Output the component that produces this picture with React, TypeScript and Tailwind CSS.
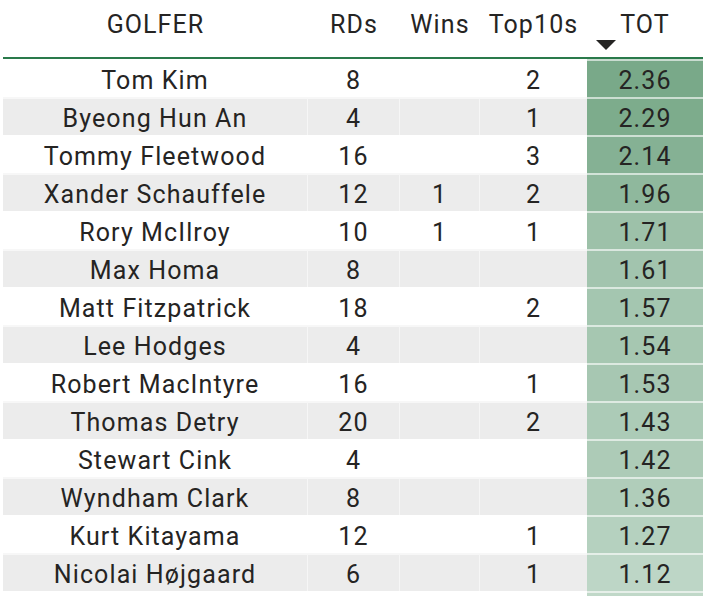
const rows = [
  { name: "Tom Kim", rds: 8, wins: "", top10: 2, tot: 2.36 },
  { name: "Byeong Hun An", rds: 4, wins: "", top10: 1, tot: 2.29 },
  { name: "Tommy Fleetwood", rds: 16, wins: "", top10: 3, tot: 2.14 },
  { name: "Xander Schauffele", rds: 12, wins: 1, top10: 2, tot: 1.96 },
  { name: "Rory McIlroy", rds: 10, wins: 1, top10: 1, tot: 1.71 },
  { name: "Max Homa", rds: 8, wins: "", top10: "", tot: 1.61 },
  { name: "Matt Fitzpatrick", rds: 18, wins: "", top10: 2, tot: 1.57 },
  { name: "Lee Hodges", rds: 4, wins: "", top10: "", tot: 1.54 },
  { name: "Robert MacIntyre", rds: 16, wins: "", top10: 1, tot: 1.53 },
  { name: "Thomas Detry", rds: 20, wins: "", top10: 2, tot: 1.43 },
  { name: "Stewart Cink", rds: 4, wins: "", top10: "", tot: 1.42 },
  { name: "Wyndham Clark", rds: 8, wins: "", top10: "", tot: 1.36 },
  { name: "Kurt Kitayama", rds: 12, wins: "", top10: 1, tot: 1.27 },
  { name: "Nicolai Højgaard", rds: 6, wins: "", top10: 1, tot: 1.12 },
];

// conditional formatting: light green (low) -> darker green (high)
const lo = [189, 214, 198];
const hi = [121, 169, 137];
const shade = (v: number) => {
  const t = Math.max(0, Math.min(1, (v - 1.12) / (2.36 - 1.12)));
  const c = lo.map((l, i) => Math.round(l + (hi[i] - l) * t));
  return `rgb(${c[0]},${c[1]},${c[2]})`;
};

const App = () => {
  return (
    <div
      className="w-[703px] h-[596px] overflow-hidden bg-white text-[#252423]"
      style={{ fontFamily: "Roboto, 'Liberation Sans', sans-serif" }}
    >
      <div className="ml-[3px] w-[700px]">
        {/* Header */}
        <div className="flex h-[59px] text-[25px] tracking-[1.1px] border-b-2 border-[#2a7a4b]">
          <div className="w-[305px] pt-[6px] text-center">GOLFER</div>
          <div className="w-[92px] pt-[6px] text-center">RDs</div>
          <div className="w-[80px] pt-[6px] text-center">Wins</div>
          <div className="w-[107px] pt-[6px] text-center">Top10s</div>
          <div className="relative w-[116px] pt-[6px] text-center">
            TOT
            <span className="absolute left-[9px] top-[40px] w-0 h-0 border-l-[10px] border-r-[10px] border-t-[10px] border-l-transparent border-r-transparent border-t-[#252423]" />
          </div>
        </div>

        {/* Body */}
        {rows.map((r, i) => (
          <div
            key={r.name}
            className={`flex h-[38px] text-[25px] tracking-[1.1px] leading-[38px] ${i % 2 === 1 ? "bg-[#ececec]" : "bg-white"}`}
          >
            <div className="w-[305px] pt-[1px] border-t-2 border-white/60 border-r border-r-white/50 text-center">{r.name}</div>
            <div className="w-[92px] pt-[1px] border-t-2 border-white/60 border-r border-r-white/50 text-center">{r.rds}</div>
            <div className="w-[80px] pt-[1px] border-t-2 border-white/60 border-r border-r-white/50 text-center">{r.wins}</div>
            <div className="w-[107px] pt-[1px] border-t-2 border-white/60 text-center">{r.top10}</div>
            <div
              className="w-[116px] pt-[1px] border-t-2 border-white/60 text-center"
              style={{ backgroundColor: shade(r.tot) }}
            >
              {r.tot.toFixed(2)}
            </div>
          </div>
        ))}
        <div className="flex h-[10px]">
          <div className="w-[584px] border-t-2 border-white" />
          <div className="w-[116px] border-t-2 border-white/60 bg-[#c0d8c8]" />
        </div>
      </div>
    </div>
  );
};

export default App;
